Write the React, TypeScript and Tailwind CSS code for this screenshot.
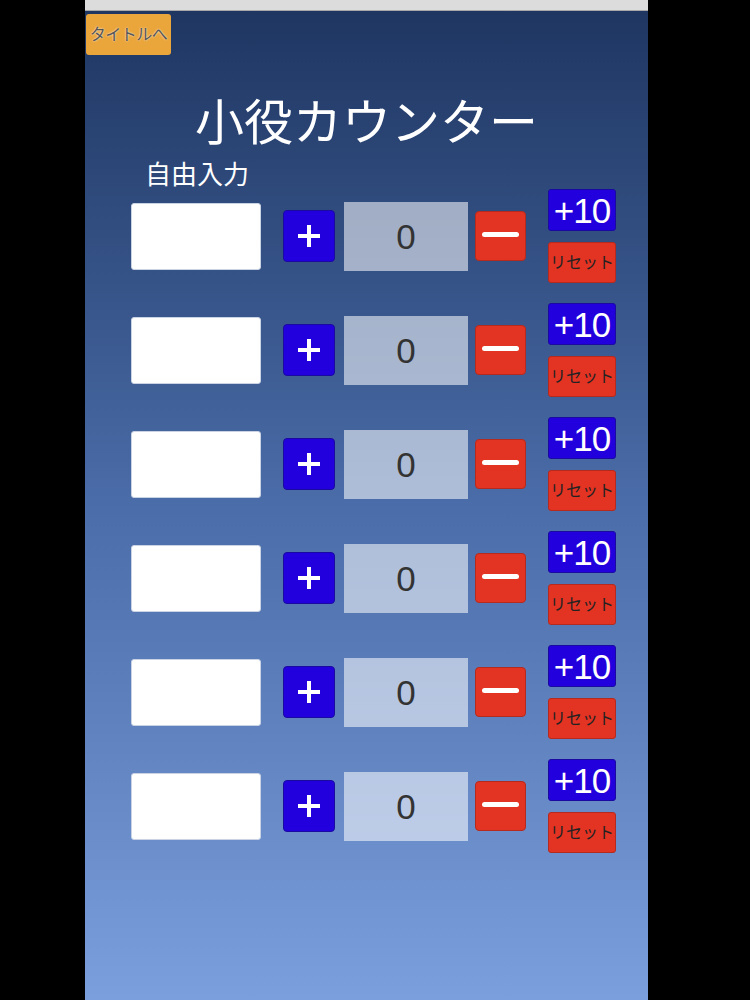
const rows = [0, 1, 2, 3, 4, 5]

function CounterRow() {
  return (
    <div className="flex items-center h-[94px] pl-[46px]">
      <input
        className="w-[130px] h-[67px] bg-white rounded-[3px] border border-[#c9d3e3] outline-none"
        type="text"
      />
      {/* plus */}
      <button className="relative ml-[22px] w-[52px] h-[52px] rounded-[4px] bg-[#2200de] border border-[#1a0aa0]">
        <span className="absolute left-[14px] top-[23px] w-[22px] h-[4px] bg-white" />
        <span className="absolute left-[23px] top-[14px] w-[4px] h-[22px] bg-white" />
      </button>
      <div className="ml-[9px] w-[124px] h-[69px] bg-white/55 flex items-center justify-center text-[35px] text-[#333] leading-none">
        0
      </div>
      {/* minus */}
      <button className="ml-[7px] w-[51px] h-[50px] rounded-[4px] bg-[#e33322] border border-[#b52a1e] flex items-center justify-center pb-[3px]">
        <span className="block w-[37px] h-[5px] bg-white rounded-full" />
      </button>
      <div className="ml-[22px] w-[68px] flex flex-col gap-[11px]">
        <button className="h-[42px] rounded-[3px] bg-[#2200de] border border-[#1a0aa0] text-white text-[35px] leading-none tracking-[-1px] flex items-center justify-center">
          +10
        </button>
        <button className="h-[41px] rounded-[3px] bg-[#e33322] border border-[#b52a1e] text-[#222] text-[16px] leading-none flex items-center justify-center whitespace-nowrap">
          リセット
        </button>
      </div>
    </div>
  )
}

export default function App() {
  return (
    <div
      className="w-[750px] h-[1000px] bg-black pl-[85px] overflow-hidden"
      style={{ fontFamily: '"Liberation Sans", "Noto Sans CJK JP", sans-serif' }}
    >
      <div className="w-[563px] h-[1000px] flex flex-col bg-linear-to-b from-[#1e3560] via-[#4a6ca8] to-[#7b9fdc]">
        {/* browser-ish top bar */}
        <div className="h-[11px] bg-[#dcdcdc] border-b border-[#a9a9a9]" />

        <div className="mt-[3px] ml-[1px]">
          <button className="w-[85px] h-[41px] bg-[#eaa53b] rounded-[3px] text-[16px] text-[#555] leading-none whitespace-nowrap tracking-[-0.5px] [text-shadow:0_0_2px_#fff]">
            タイトルへ
          </button>
        </div>

        <h1 className="mt-[44px] text-center text-white text-[49px] leading-none font-normal">
          小役カウンター
        </h1>

        <div className="mt-[14px] ml-[60px] text-white text-[26px] leading-none">
          自由入力
        </div>

        <div className="mt-[1px] flex flex-col gap-[20px]">
          {rows.map((r) => (
            <CounterRow key={r} />
          ))}
        </div>
      </div>
    </div>
  )
}
